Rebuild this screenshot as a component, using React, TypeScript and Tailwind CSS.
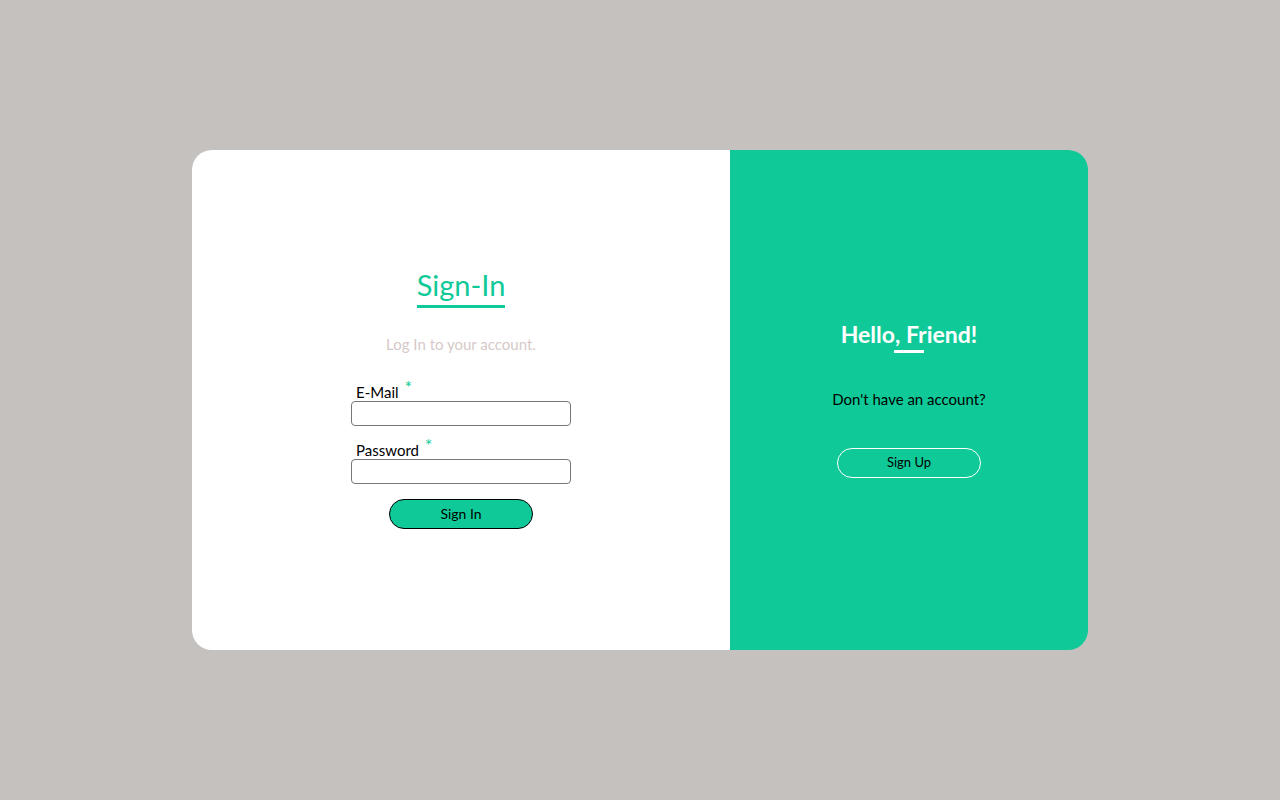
export default function App() {
  return (
    <div
      className="min-h-screen w-full bg-[#c5c1bf] flex items-center justify-center"
      style={{ fontFamily: '"Lato", "Noto Sans", sans-serif' }}
    >
      <div className="flex w-[896px] h-[500px] rounded-[20px] overflow-hidden">
        {/* ── sign-in side ── */}
        <div className="w-[538px] bg-white flex flex-col items-center justify-center pb-[4px]">
          <h1 className="text-[29px] leading-[34px] text-[#0fca98] font-normal">Sign-In</h1>
          <div className="w-[88px] h-[3px] bg-[#0fca98] mt-[3px]" />
          <p className="mt-[27px] text-[15px] leading-[18px] text-[#d6cac8]">Log In to your account.</p>

          <form className="mt-[29px] flex flex-col items-center">
            <div className="w-[220px]">
              <label className="block pl-[5px] text-[15px] leading-[18px] text-black">
                E-Mail{' '}
                <span className="relative -top-[4px] ml-[2px] text-[18px] leading-none text-[#0fca98]">*</span>
              </label>
              <input className="block w-[220px] h-[25px] border border-[#777] rounded-[4px] px-2 text-sm outline-none" />
            </div>
            <div className="w-[220px] mt-[14px]">
              <label className="block pl-[5px] text-[15px] leading-[18px] text-black">
                Password{' '}
                <span className="relative -top-[4px] ml-[2px] text-[18px] leading-none text-[#0fca98]">*</span>
              </label>
              <input
                type="password"
                className="block w-[220px] h-[25px] border border-[#777] rounded-[4px] px-2 text-sm outline-none"
              />
            </div>
            <button
              type="button"
              className="mt-[15px] w-[144px] h-[30px] rounded-full bg-[#0fca98] border border-black text-[14px] text-black"
            >
              Sign In
            </button>
          </form>
        </div>

        {/* ── sign-up side ── */}
        <div className="flex-1 bg-[#0fca98] flex flex-col items-center justify-center pb-[2px]">
          <h2 className="text-[23px] leading-[26px] font-bold text-white">Hello, Friend!</h2>
          <div className="w-[30px] h-[3px] bg-white mt-[3px]" />
          <p className="mt-[37px] text-[15px] leading-[18px] text-black">Don't have an account?</p>
          <button
            type="button"
            className="mt-[40px] w-[144px] h-[30px] rounded-full border border-white text-[13px] text-black"
          >
            Sign Up
          </button>
        </div>
      </div>
    </div>
  )
}
